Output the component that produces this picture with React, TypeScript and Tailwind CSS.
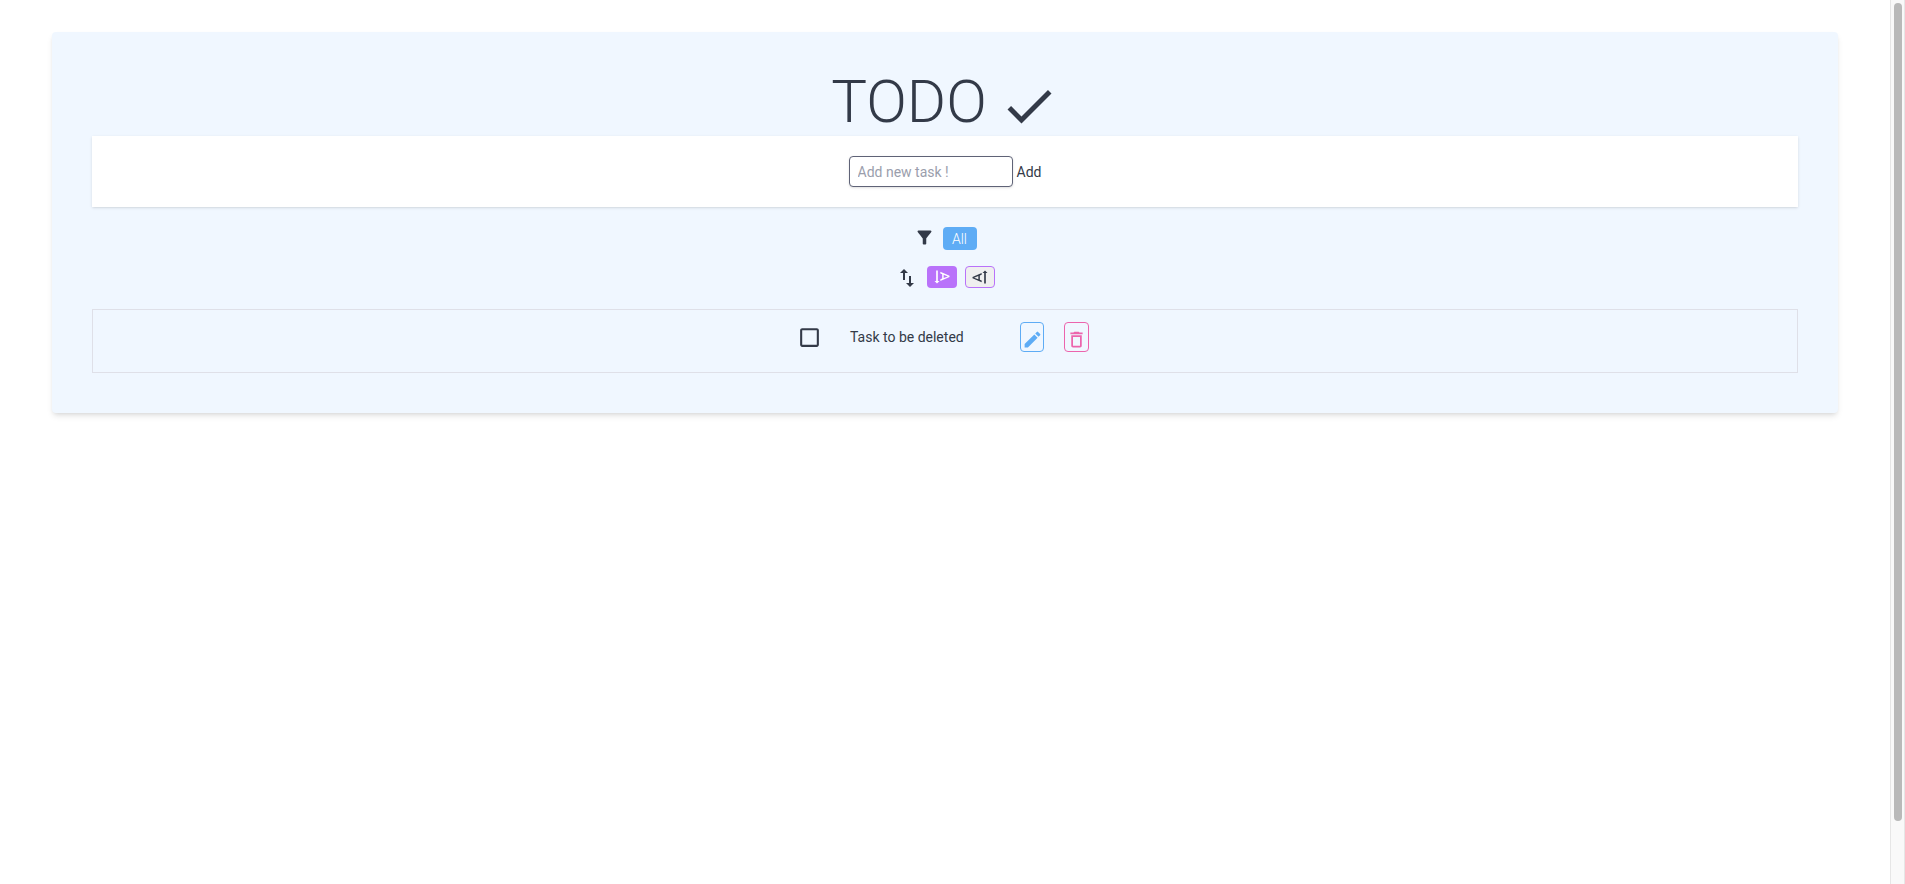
import { useState } from "react";
import {
  MdCheck,
  MdCheckBoxOutlineBlank,
  MdDeleteOutline,
  MdEdit,
  MdFilterAlt,
  MdImportExport,
  MdTextRotateUp,
  MdTextRotationDown,
} from "react-icons/md";

export default function App() {
  const [task, setTask] = useState("");
  const [done, setDone] = useState(false);

  return (
    <div className="flex min-h-screen bg-white font-['Roboto',sans-serif] text-sm leading-5 text-[#333a48]">
      <main className="min-w-0 flex-1 px-[52px] py-8">
        <section className="rounded bg-[#f0f7ff] p-10 shadow-md">
          <h1 className="flex h-16 items-center justify-center gap-3 pb-1 text-6xl font-light">
            TODO <MdCheck aria-hidden="true" className="mt-2" />
          </h1>

          <form
            className="flex items-center justify-center gap-1 bg-white p-5 shadow-sm"
            onSubmit={(event) => event.preventDefault()}
          >
            <input
              type="text"
              aria-label="New task"
              placeholder="Add new task !"
              value={task}
              onChange={(event) => setTask(event.target.value)}
              className="h-[31px] w-[164px] rounded border border-[#5f6377] bg-white px-2 shadow-sm placeholder:text-[#9a9eac]"
            />
            <button type="submit">Add</button>
          </form>

          <div className="mt-5 flex h-[23px] items-start justify-center gap-2">
            <MdFilterAlt aria-hidden="true" size={21} />
            <button type="button" className="h-[23px] w-[34px] rounded bg-[#5eacf5] font-light text-white">
              All
            </button>
          </div>

          <div className="mt-4 flex h-[22px] items-center justify-center gap-2">
            <MdImportExport aria-hidden="true" size={24} className="mt-0.5" />
            <button
              type="button"
              aria-label="Sort descending"
              className="flex h-[22px] w-[30px] items-center justify-center rounded bg-[#b972fa] text-white"
            >
              <MdTextRotationDown size={20} />
            </button>
            <button
              type="button"
              aria-label="Sort ascending"
              className="flex h-[22px] w-[30px] items-center justify-center rounded border border-[#b972fa] bg-[#efefef]"
            >
              <MdTextRotateUp size={20} className="shrink-0" />
            </button>
          </div>

          <ul className="mt-[21px] border border-[#dfe0e8]">
            <li className="flex h-[62px] items-start justify-center pt-3 pr-1">
              <label className="flex h-[30px] items-center gap-7">
                <input
                  type="checkbox"
                  checked={done}
                  onChange={() => setDone(!done)}
                  className="peer sr-only"
                />
                <MdCheckBoxOutlineBlank aria-hidden="true" size={25} className="peer-checked:text-[#5eacf5]" />
                <span className="w-[142px]">Task to be deleted</span>
              </label>
              <button
                type="button"
                aria-label="Edit task"
                className="ml-7 flex h-[30px] w-6 items-center justify-center rounded border border-[#5eacf5] text-[#5eacf5]"
              >
                <MdEdit size={21} className="mt-1 shrink-0" />
              </button>
              <button
                type="button"
                aria-label="Delete task"
                className="ml-5 flex h-[30px] w-[25px] items-center justify-center rounded border border-[#ec64ad] text-[#ec64ad]"
              >
                <MdDeleteOutline size={21} className="mt-1 shrink-0" />
              </button>
            </li>
          </ul>
        </section>
      </main>

      <div aria-hidden="true" className="sticky top-0 h-screen w-[15px] shrink-0 border-x border-[#e6e6e6] bg-[#f9f9f9] py-[3px] pl-[3px]">
        <div className="h-[93.2%] w-2 rounded-full bg-[#b9b9b9]" />
      </div>
    </div>
  );
}
